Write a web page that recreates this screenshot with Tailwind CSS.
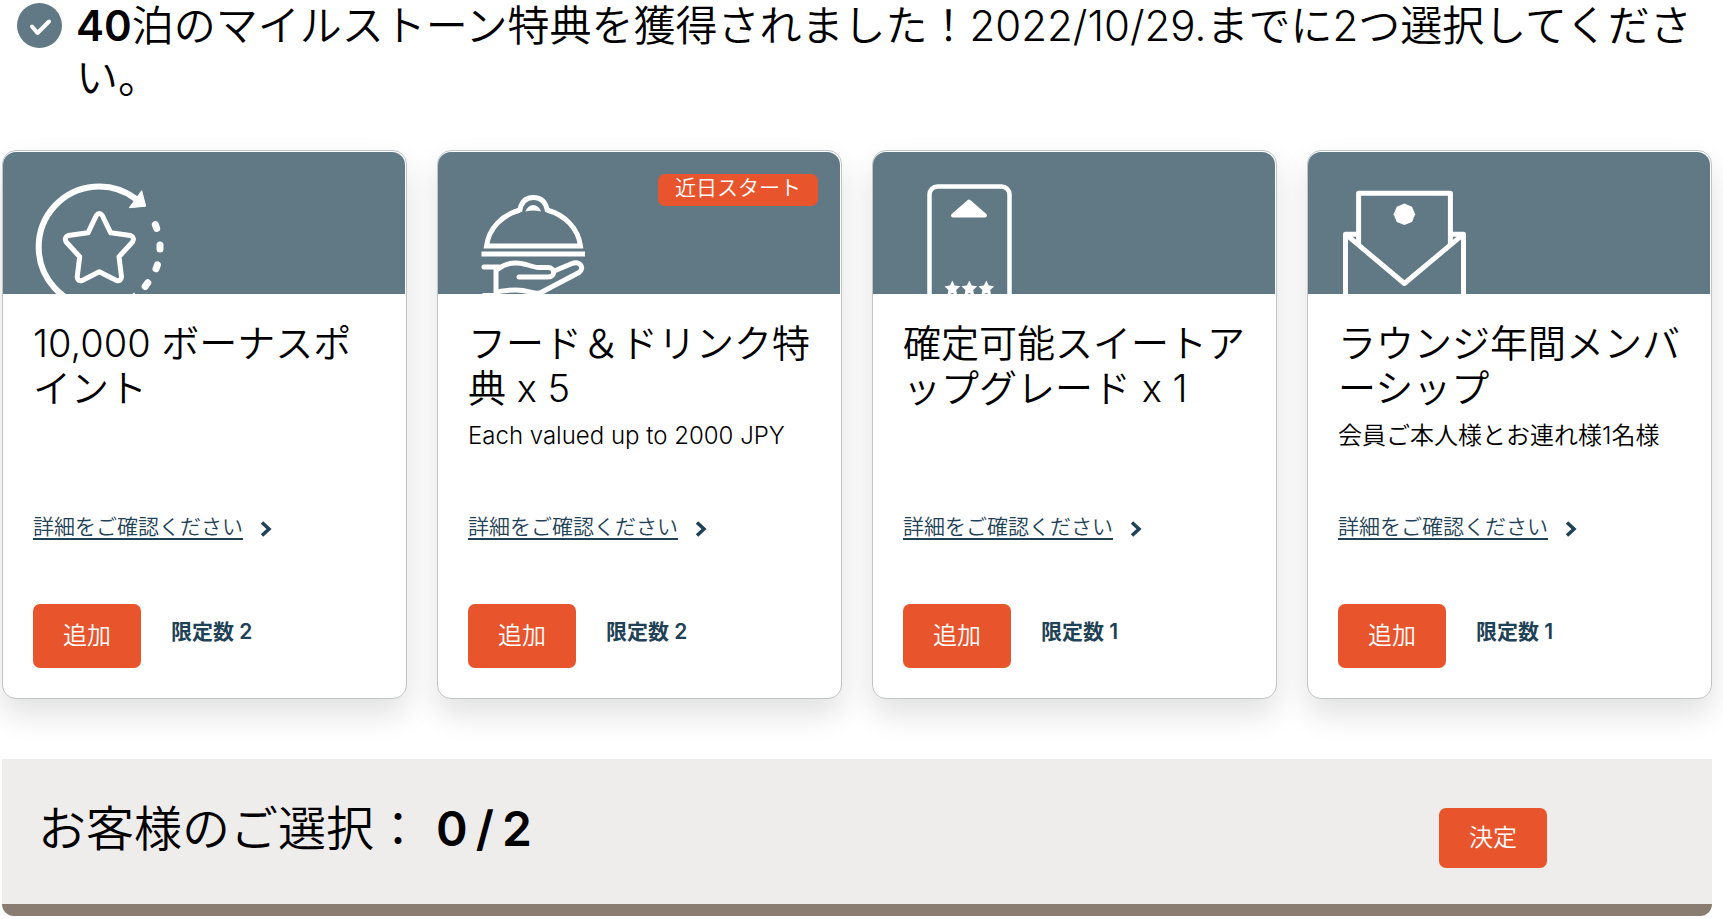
<!DOCTYPE html>
<html lang="ja">
<head>
    <meta charset="UTF-8">
    <meta name="viewport" content="width=device-width, initial-scale=1.0">
    <title>マイルストーン特典</title>
    <script src="https://cdn.jsdelivr.net/npm/@tailwindcss/browser@4"></script>
</head>
<body class="bg-white text-black font-[350] font-['Inter','Noto_Sans_CJK_JP',sans-serif]">
    <main class="pl-0.5 pr-[11px]">
        <!-- Heading -->
        <header class="flex items-start gap-[14px] pl-[15px] mb-[46px]">
            <svg class="mt-[3px] size-[45px] shrink-0" viewBox="0 0 45 45" aria-hidden="true">
                <circle cx="22.5" cy="22.5" r="22.5" fill="#617985"/>
                <path d="M15 23.500l5.500 6.500 11.500-11.500" fill="none" stroke="#fff" stroke-width="4" stroke-linecap="round" stroke-linejoin="round"/>
            </svg>
            <h1 class="text-[42px] leading-[52px] font-[350]"><span class="font-semibold">40</span>泊のマイルストーン特典を獲得されました！2022/10/29.までに2つ選択してください。</h1>
        </header>

        <!-- Reward cards -->
        <section class="grid grid-cols-4 gap-[30px] mb-[60px]">
            <article class="flex flex-col rounded-[14px] border border-[#c0c6c8] bg-white pt-px shadow-[0_15px_30px_rgba(0,0,0,0.12)]">
                <div class="mr-px h-[142px] overflow-hidden rounded-t-[13px] bg-[#617985]">
                    <svg class="h-[142px] w-[200px]" viewBox="0 0 200 142" fill="none" stroke="#fff" aria-hidden="true">
                        <path d="M133 47A60.500 60.500 0 1 0 133 143" stroke-width="6"/>
                        <path d="M138.700 38.700L142.700 54.200L126.300 55.700Z" fill="#fff" stroke-width="1" stroke-linejoin="round"/>
                        <path d="M152.300 72.500l1.400 4M157 93v4M154.400 112.800l-1.400 4M144.800 130.800l-2.600 3.600" stroke-width="7" stroke-linecap="round"/>
                        <path d="M93.300 63.500Q96.300 59.500 99.300 63.500L107.700 80.800L127.500 83.500Q132 85.500 129.500 90L116 104.700L118.500 125Q118 129.500 113.500 128.500L96.300 119.700L79.200 128.500Q74.500 129.500 74.200 125L76.700 104.700L63.200 90Q60.700 85.500 65.200 83.500L85 80.800Z" stroke-width="5" stroke-linejoin="round"/>
                    </svg>
                </div>
                <div class="flex flex-1 flex-col px-[30px] pt-[27px] pb-[30px]">
                    <div class="min-h-[190px]">
                        <h2 class="text-[38px] leading-[45px] font-[350]">10,000 ボーナスポイント</h2>
                    </div>
                    <a href="#" class="flex items-center gap-[17px] text-[21px] leading-8 text-[#1f4256]">
                        <span class="underline decoration-2 underline-offset-4">詳細をご確認ください</span>
                        <svg class="mt-1 h-4 w-3" viewBox="0 0 12 16" fill="none" stroke="#1f4256" stroke-width="3.500" aria-hidden="true"><path d="M2 1.500L9 8L2 14.500"/></svg>
                    </a>
                    <div class="mt-[61px] flex items-center gap-[30px]">
                        <button type="button" class="h-16 w-[108px] rounded-[7px] bg-[#e8552d] text-2xl text-white">追加</button>
                        <p class="pb-2 text-[21px] leading-8 font-semibold text-[#1f4256]">限定数 2</p>
                    </div>
                </div>
            </article>

            <article class="flex flex-col rounded-[14px] border border-[#c0c6c8] bg-white pt-px shadow-[0_15px_30px_rgba(0,0,0,0.12)]">
                <div class="relative mr-px h-[142px] overflow-hidden rounded-t-[13px] bg-[#617985]">
                    <svg class="h-[142px] w-[200px]" viewBox="0 0 200 142" fill="none" stroke="#fff" stroke-width="5" aria-hidden="true">
                        <path d="M82 58C64 63 51 76 48.500 94H142.500C140 76 127 63 109 58"/>
                        <path d="M81.500 59.500C83 50 88 45.500 95.300 45.500S108 50 109.500 59.500"/>
                        <path d="M87.500 59.500Q90 53 95.300 53T103 59.500Q95 57.500 87.500 59.500Z" fill="#fff" stroke="none"/>
                        <path d="M43.500 102H147"/>
                        <path d="M46 115H61M58 115V142M46 143.500H60" stroke-linecap="round"/>
                        <path d="M60 117C68 111 78 109.500 88 112.500C94 114.500 97 115.500 101 115.500H110C117 115.500 118 125 110 125H81" stroke-linecap="round"/>
                        <path d="M115 119.500L134 111.500C142 108.500 147 116 141 120.500L104 140C98 144 92 138 78 138C71 138 65 138.500 59 140" stroke-linejoin="round"/>
                    </svg>
                    <span class="absolute top-[22px] right-[22px] h-8 rounded-[7px] bg-[#e8552d] px-[17px] text-[21px] leading-[27px] text-white">近日スタート</span>
                </div>
                <div class="flex flex-1 flex-col px-[30px] pt-[27px] pb-[30px]">
                    <div class="min-h-[190px]">
                        <h2 class="text-[38px] leading-[45px] font-[350]">フード＆ドリンク特典 x 5</h2>
                        <p class="mt-[7px] text-2xl leading-9">Each valued up to 2000 JPY</p>
                    </div>
                    <a href="#" class="flex items-center gap-[17px] text-[21px] leading-8 text-[#1f4256]">
                        <span class="underline decoration-2 underline-offset-4">詳細をご確認ください</span>
                        <svg class="mt-1 h-4 w-3" viewBox="0 0 12 16" fill="none" stroke="#1f4256" stroke-width="3.500" aria-hidden="true"><path d="M2 1.500L9 8L2 14.500"/></svg>
                    </a>
                    <div class="mt-[61px] flex items-center gap-[30px]">
                        <button type="button" class="h-16 w-[108px] rounded-[7px] bg-[#e8552d] text-2xl text-white">追加</button>
                        <p class="pb-2 text-[21px] leading-8 font-semibold text-[#1f4256]">限定数 2</p>
                    </div>
                </div>
            </article>

            <article class="flex flex-col rounded-[14px] border border-[#c0c6c8] bg-white pt-px shadow-[0_15px_30px_rgba(0,0,0,0.12)]">
                <div class="mr-px h-[142px] overflow-hidden rounded-t-[13px] bg-[#617985]">
                    <svg class="h-[142px] w-[200px]" viewBox="0 0 200 142" fill="#fff" aria-hidden="true">
                        <rect x="56.500" y="34.500" width="80" height="130" rx="8" fill="none" stroke="#fff" stroke-width="4.500"/>
                        <path d="M96 49.500L112 63.500H80Z" stroke="#fff" stroke-width="4" stroke-linejoin="round"/>
                        <path id="star" d="M79.300 128.500l2.400 5 5.500.7-4 3.900 1 5.400-4.900-2.600-4.900 2.600 1-5.400-4-3.900 5.500-.7z"/>
                        <use href="#star" x="17"/>
                        <use href="#star" x="34"/>
                    </svg>
                </div>
                <div class="flex flex-1 flex-col px-[30px] pt-[27px] pb-[30px]">
                    <div class="min-h-[190px]">
                        <h2 class="text-[38px] leading-[45px] font-[350]">確定可能スイートアップグレード x 1</h2>
                    </div>
                    <a href="#" class="flex items-center gap-[17px] text-[21px] leading-8 text-[#1f4256]">
                        <span class="underline decoration-2 underline-offset-4">詳細をご確認ください</span>
                        <svg class="mt-1 h-4 w-3" viewBox="0 0 12 16" fill="none" stroke="#1f4256" stroke-width="3.500" aria-hidden="true"><path d="M2 1.500L9 8L2 14.500"/></svg>
                    </a>
                    <div class="mt-[61px] flex items-center gap-[30px]">
                        <button type="button" class="h-16 w-[108px] rounded-[7px] bg-[#e8552d] text-2xl text-white">追加</button>
                        <p class="pb-2 text-[21px] leading-8 font-semibold text-[#1f4256]">限定数 1</p>
                    </div>
                </div>
            </article>

            <article class="flex flex-col rounded-[14px] border border-[#c0c6c8] bg-white pt-px shadow-[0_15px_30px_rgba(0,0,0,0.12)]">
                <div class="mr-px h-[142px] overflow-hidden rounded-t-[13px] bg-[#617985]">
                    <svg class="h-[142px] w-[200px]" viewBox="0 0 200 142" fill="none" stroke="#fff" stroke-width="5" stroke-linejoin="round" aria-hidden="true">
                        <path d="M50.600 93V41.300H142.400V93"/>
                        <path d="M50 82.300H37.500V145M143 82.300H155.500V145"/>
                        <path d="M38.500 82.800L96.400 131.500L154.500 82.800"/>
                        <path d="M96.400 51.500L104 54.700L107.200 62.300L104 69.900L96.400 73.100L88.800 69.900L85.600 62.300L88.800 54.700Z" fill="#fff" stroke="none"/>
                    </svg>
                </div>
                <div class="flex flex-1 flex-col px-[30px] pt-[27px] pb-[30px]">
                    <div class="min-h-[190px]">
                        <h2 class="text-[38px] leading-[45px] font-[350]">ラウンジ年間メンバーシップ</h2>
                        <p class="mt-[7px] text-2xl leading-9">会員ご本人様とお連れ様1名様</p>
                    </div>
                    <a href="#" class="flex items-center gap-[17px] text-[21px] leading-8 text-[#1f4256]">
                        <span class="underline decoration-2 underline-offset-4">詳細をご確認ください</span>
                        <svg class="mt-1 h-4 w-3" viewBox="0 0 12 16" fill="none" stroke="#1f4256" stroke-width="3.500" aria-hidden="true"><path d="M2 1.500L9 8L2 14.500"/></svg>
                    </a>
                    <div class="mt-[61px] flex items-center gap-[30px]">
                        <button type="button" class="h-16 w-[108px] rounded-[7px] bg-[#e8552d] text-2xl text-white">追加</button>
                        <p class="pb-2 text-[21px] leading-8 font-semibold text-[#1f4256]">限定数 1</p>
                    </div>
                </div>
            </article>
        </section>

        <!-- Selection bar -->
        <section class="flex h-[157px] items-center justify-between rounded-b-xl border-b-[12px] border-[#887d70] bg-[#efedeb] pr-[165px] pl-9">
            <p class="flex items-center pb-1.5 text-5xl leading-[60px]">
                <span>お客様のご選択：</span>
                <span class="ml-[14px] flex gap-2 font-semibold"><span>0</span><span>/</span><span>2</span></span>
            </p>
            <button type="button" class="mt-3 h-[60px] w-[108px] rounded-[7px] bg-[#e8552d] text-2xl text-white">決定</button>
        </section>
    </main>
</body>
</html>
